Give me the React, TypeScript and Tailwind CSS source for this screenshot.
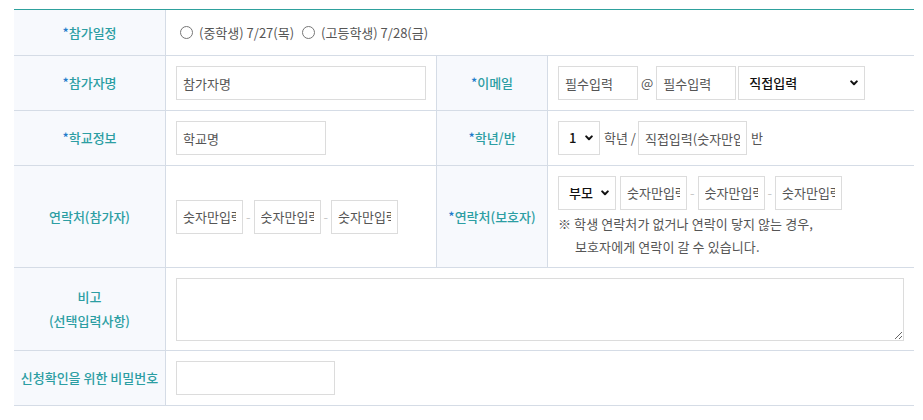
import React from 'react';

const Chevron = () => (
  <svg width="8" height="6" viewBox="0 0 8 6" className="shrink-0">
    <path d="M1.2 1.4 4 4.3l2.8-2.9" fill="none" stroke="#111" strokeWidth="2" strokeLinecap="round" strokeLinejoin="round" />
  </svg>
);

const Label = ({ children, req = false, className = '' }: { children: React.ReactNode; req?: boolean; className?: string }) => (
  <div className={`bg-[#f7f9fd] border-b border-r border-[#d5dce6] flex flex-col items-center justify-center text-center text-[13px] font-medium text-[#2c9ea3] ${className}`}>
    <div>
      {req && <span className="text-[#1f7ccc]">*</span>}
      {children}
    </div>
  </div>
);

const TextBox = ({ ph, w }: { ph?: string; w: string }) => (
  <input
    type="text"
    placeholder={ph}
    className={`${w} h-[34px] border border-[#dcdcdc] bg-white px-[6px] text-[13px] text-[#333] placeholder:text-[#555] outline-none`}
  />
);

const FakeSelect = ({ value, w, pl }: { value: string; w: string; pl: string }) => (
  <div className={`${w} shrink-0 h-[34px] border border-[#dcdcdc] bg-white flex items-center justify-between ${pl} pr-[6px] text-[13px] text-[#111] font-medium`}>
    <span>{value}</span>
    <Chevron />
  </div>
);

const Dash = () => <span className="mx-[3px] text-[13px] text-[#c8c8c8]">-</span>;

export default function App() {
  return (
    <div className="w-[923px] h-[420px] bg-white pt-[9px] pl-[14px] font-['Noto_Sans_CJK_KR','Noto_Sans',sans-serif]">
      <div className="w-[900px] border-t border-[#2ea19d] grid grid-cols-[152px_271px_111px_366px] grid-rows-[46px_55px_55px_102px_83px_55px]">
        {/* 참가일정 */}
        <Label req>참가일정</Label>
        <div className="col-span-3 border-b border-[#d5dce6] flex items-center pl-[14px] text-[13px] text-[#555]">
          <label className="flex items-center">
            <input type="radio" name="day" className="w-[13px] h-[13px] m-0 mr-[6px]" />
            <span>(중학생) 7/27(목)</span>
          </label>
          <label className="flex items-center ml-[8px]">
            <input type="radio" name="day" className="w-[13px] h-[13px] m-0 mr-[6px]" />
            <span>(고등학생) 7/28(금)</span>
          </label>
        </div>

        {/* 참가자명 / 이메일 */}
        <Label req>참가자명</Label>
        <div className="border-b border-r border-[#d5dce6] flex items-center pl-[10px]">
          <TextBox ph="참가자명" w="w-[250px]" />
        </div>
        <Label req>이메일</Label>
        <div className="border-b border-[#d5dce6] flex items-center pl-[10px] text-[13px] text-[#555]">
          <TextBox ph="필수입력" w="w-[80px]" />
          <span className="mx-[3px]">@</span>
          <TextBox ph="필수입력" w="w-[80px]" />
          <div className="ml-[2px]">
            <FakeSelect value="직접입력" w="w-[127px]" pl="pl-[10px]" />
          </div>
        </div>

        {/* 학교정보 / 학년반 */}
        <Label req>학교정보</Label>
        <div className="border-b border-r border-[#d5dce6] flex items-center pl-[10px]">
          <TextBox ph="학교명" w="w-[150px]" />
        </div>
        <Label req>학년/반</Label>
        <div className="border-b border-[#d5dce6] flex items-center pl-[10px] text-[13px] text-[#555]">
          <FakeSelect value="1" w="w-[42px]" pl="pl-[10px]" />
          <span className="ml-[4px] mr-[2px]">학년 /</span>
          <TextBox ph="직접입력(숫자만입력)" w="w-[109px]" />
          <span className="ml-[4px]">반</span>
        </div>

        {/* 연락처 */}
        <Label>연락처(참가자)</Label>
        <div className="border-b border-r border-[#d5dce6] flex items-center pl-[10px]">
          <TextBox ph="숫자만입력" w="w-[67px]" />
          <Dash />
          <TextBox ph="숫자만입력" w="w-[67px]" />
          <Dash />
          <TextBox ph="숫자만입력" w="w-[67px]" />
        </div>
        <Label req>연락처(보호자)</Label>
        <div className="border-b border-[#d5dce6] flex flex-col justify-center pl-[10px] text-[13px] text-[#555]">
          <div className="flex items-center">
            <FakeSelect value="부모" w="w-[58px]" pl="pl-[10px]" />
            <div className="ml-[4px] flex items-center">
              <TextBox ph="숫자만입력" w="w-[67px]" />
              <Dash />
              <TextBox ph="숫자만입력" w="w-[67px]" />
              <Dash />
              <TextBox ph="숫자만입력" w="w-[67px]" />
            </div>
          </div>
          <p className="mt-[2px] leading-[23px] tracking-[0.1px]">
            ※ 학생 연락처가 없거나 연락이 닿지 않는 경우,
            <br />
            <span className="pl-[17px]">보호자에게 연락이 갈 수 있습니다.</span>
          </p>
        </div>

        {/* 비고 */}
        <div className="bg-[#f7f9fd] border-b border-r border-[#d5dce6] flex flex-col items-center justify-center text-[13px] font-medium text-[#2c9ea3] leading-[24px]">
          <span>비고</span>
          <span>(선택입력사항)</span>
        </div>
        <div className="col-span-3 border-b border-[#d5dce6] flex items-center px-[10px]">
          <textarea className="w-full h-[63px] border border-[#dcdcdc] outline-none" />
        </div>

        {/* 비밀번호 */}
        <Label>신청확인을 위한 비밀번호</Label>
        <div className="col-span-3 border-b border-[#d5dce6] flex items-center pl-[10px]">
          <input type="password" className="w-[159px] h-[34px] border border-[#dcdcdc] outline-none" />
        </div>
      </div>
    </div>
  );
}
